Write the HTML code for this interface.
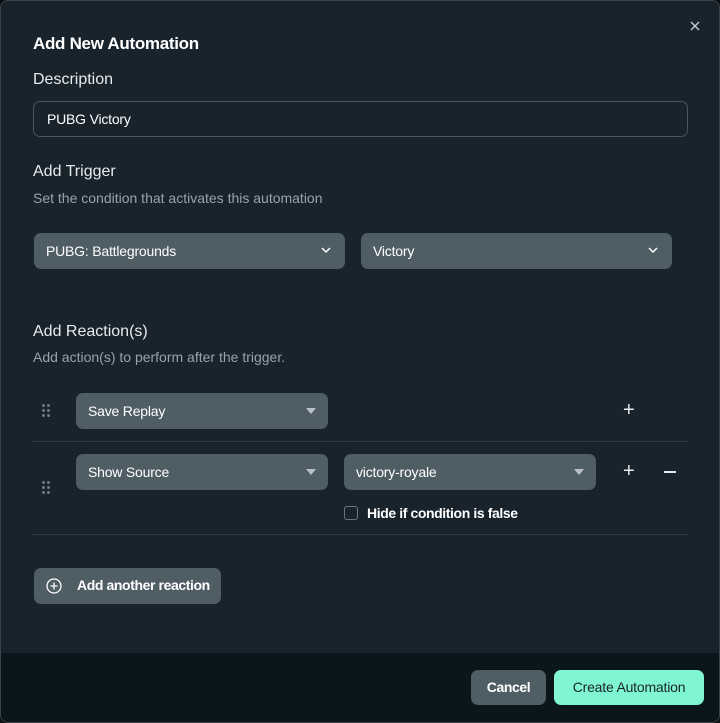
<html><head><style>
body{margin:0;width:720px;height:723px;background:#0b0f12;font-family:"Liberation Sans",sans-serif;overflow:hidden}
.m{position:absolute;left:0px;top:0px;width:718px;height:721px;border:1px solid #3b4249;border-radius:8px;background:#18232c;overflow:hidden}
.t{position:absolute;color:#fff}
.sel{position:absolute;background:#4f5d65;border-radius:7px;height:36px;color:#fff;font-size:14px;line-height:36px;padding-left:12px;box-sizing:border-box;letter-spacing:-0.2px}
.ch{position:absolute;right:14px;top:14px}
.tri{position:absolute;right:12px;top:15px;width:0;height:0;border-left:5px solid transparent;border-right:5px solid transparent;border-top:6px solid #b9c1c6}
.hr{position:absolute;left:32px;width:654px;height:1px;background:#2f3b43}
.grip{position:absolute;width:10px;height:14px}
.grip i{position:absolute;width:3px;height:3px;border-radius:50%;background:#6e7a81}
.pm{position:absolute;color:#e6eaec;font-size:20px;line-height:20px}
b{letter-spacing:-0.4px}
</style></head><body><div class="m">
<div class="t" style="left:32px;top:33px;font-size:17px;font-weight:bold;letter-spacing:-0.3px">Add New Automation</div>
<svg style="position:absolute;left:689px;top:20px" width="10" height="10"><path d="M1 1L9 9M9 1L1 9" stroke="#c7cdd1" stroke-width="1.4"/></svg>
<div class="t" style="left:32px;top:70px;font-size:16px;color:#e7ebee">Description</div>
<div style="position:absolute;left:32px;top:100px;width:655px;height:36px;border:1px solid #4a565e;border-radius:7px;box-sizing:border-box;color:#fff;font-size:14px;line-height:34px;padding-left:13px;letter-spacing:-0.2px">PUBG Victory</div>
<div class="t" style="left:32px;top:162px;font-size:16px;color:#e7ebee">Add Trigger</div>
<div class="t" style="left:32px;top:189px;font-size:14px;color:#9aa3a9">Set the condition that activates this automation</div>
<div class="sel" style="left:33px;top:232px;width:311px">PUBG: Battlegrounds<svg class="ch" width="10" height="7"><path d="M1 1L5 5L9 1" stroke="#fff" stroke-width="1.5" fill="none"/></svg></div>
<div class="sel" style="left:360px;top:232px;width:311px">Victory<svg class="ch" width="10" height="7"><path d="M1 1L5 5L9 1" stroke="#fff" stroke-width="1.5" fill="none"/></svg></div>
<div class="t" style="left:32px;top:322px;font-size:16px;color:#e7ebee">Add Reaction(s)</div>
<div class="t" style="left:32px;top:348px;font-size:14px;color:#9aa3a9">Add action(s) to perform after the trigger.</div>
<div class="grip" style="left:41px;top:403px"><i style="left:0;top:0"></i><i style="left:5px;top:0"></i><i style="left:0;top:5px"></i><i style="left:5px;top:5px"></i><i style="left:0;top:10px"></i><i style="left:5px;top:10px"></i></div>
<div class="sel" style="left:75px;top:392px;width:252px">Save Replay<span class="tri"></span></div>
<div class="pm" style="left:622px;top:399px">+</div>
<div class="hr" style="top:440px"></div>
<div class="grip" style="left:41px;top:480px"><i style="left:0;top:0"></i><i style="left:5px;top:0"></i><i style="left:0;top:5px"></i><i style="left:5px;top:5px"></i><i style="left:0;top:10px"></i><i style="left:5px;top:10px"></i></div>
<div class="sel" style="left:75px;top:453px;width:252px">Show Source<span class="tri"></span></div>
<div class="sel" style="left:343px;top:453px;width:252px">victory-royale<span class="tri"></span></div>
<div class="pm" style="left:622px;top:460px">+</div>
<div style="position:absolute;left:663px;top:470px;width:12px;height:1.6px;background:#e6eaec"></div>
<div style="position:absolute;left:343px;top:505px;width:14px;height:14px;border:1px solid #6b767d;border-radius:3px;box-sizing:border-box"></div>
<div class="t" style="left:366px;top:504px;font-size:14px;font-weight:bold"><b>Hide if condition is false</b></div>
<div class="hr" style="top:533px"></div>
<div style="position:absolute;left:33px;top:567px;width:187px;height:36px;background:#4f5d65;border-radius:7px"></div>
<svg style="position:absolute;left:45px;top:577px" width="16" height="16"><circle cx="8" cy="8" r="7" stroke="#fff" stroke-width="1.3" fill="none"/><path d="M8 4.5V11.5M4.5 8H11.5" stroke="#fff" stroke-width="1.3"/></svg>
<div class="t" style="left:76px;top:576px;font-size:14px;font-weight:bold"><b>Add another reaction</b></div>
<div style="position:absolute;left:0;top:652px;width:720px;height:70px;background:#0a151c"></div>
<div style="position:absolute;left:470px;top:669px;width:75px;height:35px;background:#4f5d65;border-radius:7px;color:#fff;font-weight:bold;font-size:14px;line-height:35px;text-align:center"><b>Cancel</b></div>
<div style="position:absolute;left:553px;top:669px;width:150px;height:35px;background:#80f5d2;border-radius:7px;color:#17242d;font-size:14px;line-height:35px;text-align:center;letter-spacing:-0.2px">Create Automation</div>
</div></body></html>
